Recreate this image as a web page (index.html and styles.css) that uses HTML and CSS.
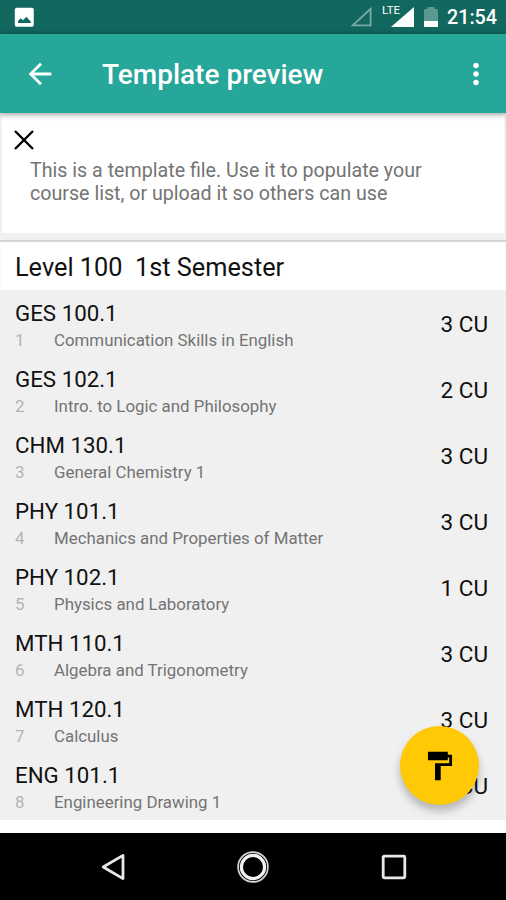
FILE: index.html
```html
<!DOCTYPE html>
<html lang="en">
<head>
  <meta charset="UTF-8">
  <meta name="viewport" content="width=device-width, initial-scale=1.0">
  <title>Template preview</title>
  <link rel="stylesheet" href="styles.css">
</head>
<body>
  <div class="app">
    <div class="status-bar">
      <svg class="picture-icon" width="20" height="20" viewBox="0 0 20 20">
        <rect x="0.8" y="0.8" width="19" height="19" rx="2" fill="#fff"/>
        <path d="M4 16v-1.8l2.4-3 2.6 2 3.4-3.4 4.4 5V16z" fill="#12685f"/>
      </svg>
      <div class="status-right">
        <svg width="24" height="20" viewBox="0 0 24 20">
          <path d="M3.8 18.4h17.8V1.8z" fill="none" stroke="#79aaa5" stroke-width="1.8"/>
        </svg>
        <span class="lte">LTE</span>
        <svg class="signal-icon" width="23" height="20" viewBox="0 0 23 20">
          <path d="M0 20h23V0z" fill="#fff"/>
        </svg>
        <svg class="battery-icon" width="14" height="20" viewBox="0 0 14 20">
          <path d="M0 3.5Q0 2 1.5 2H3.5V0h7v2h2Q14 2 14 3.5V14H0z" fill="#5a9992"/>
          <path d="M0 14h14v6H0z" fill="#fff"/>
        </svg>
        <span class="clock">21:54</span>
      </div>
    </div>

    <div class="toolbar">
      <svg width="34" height="34" viewBox="0 0 24 24">
        <path d="M20 11H7.83l5.59-5.59L12 4l-8 8 8 8 1.41-1.41L7.83 13H20v-2z" fill="#fff"/>
      </svg>
      <h1>Template preview</h1>
      <svg width="34" height="34" viewBox="0 0 24 24">
        <path d="M12 8c1.1 0 2-.9 2-2s-.9-2-2-2-2 .9-2 2 .9 2 2 2zm0 2c-1.1 0-2 .9-2 2s.9 2 2 2 2-.9 2-2-.9-2-2-2zm0 6c-1.1 0-2 .9-2 2s.9 2 2 2 2-.9 2-2-.9-2-2-2z" fill="#fff"/>
      </svg>
    </div>

    <div class="notice">
      <svg width="20" height="20" viewBox="0 0 20 20">
        <path d="M1 1l18 18M19 1L1 19" stroke="#000" stroke-width="2.4"/>
      </svg>
      <p>This is a template file. Use it to populate your<br>course list, or upload it so others can use</p>
    </div>

    <h2>Level 100&nbsp; 1st Semester</h2>

    <div class="course-list">
      <div class="course">
        <div class="code">GES 100.1</div>
        <div class="detail"><span class="number">1</span>Communication Skills in English</div>
        <div class="units">3 CU</div>
      </div>
      <div class="course">
        <div class="code">GES 102.1</div>
        <div class="detail"><span class="number">2</span>Intro. to Logic and Philosophy</div>
        <div class="units">2 CU</div>
      </div>
      <div class="course">
        <div class="code">CHM 130.1</div>
        <div class="detail"><span class="number">3</span>General Chemistry 1</div>
        <div class="units">3 CU</div>
      </div>
      <div class="course">
        <div class="code">PHY 101.1</div>
        <div class="detail"><span class="number">4</span>Mechanics and Properties of Matter</div>
        <div class="units">3 CU</div>
      </div>
      <div class="course">
        <div class="code">PHY 102.1</div>
        <div class="detail"><span class="number">5</span>Physics and Laboratory</div>
        <div class="units">1 CU</div>
      </div>
      <div class="course">
        <div class="code">MTH 110.1</div>
        <div class="detail"><span class="number">6</span>Algebra and Trigonometry</div>
        <div class="units">3 CU</div>
      </div>
      <div class="course">
        <div class="code">MTH 120.1</div>
        <div class="detail"><span class="number">7</span>Calculus</div>
        <div class="units">3 CU</div>
      </div>
      <div class="course">
        <div class="code">ENG 101.1</div>
        <div class="detail"><span class="number">8</span>Engineering Drawing 1</div>
        <div class="units">3 CU</div>
      </div>
    </div>

    <button class="fab">
      <svg width="34" height="34" viewBox="0 0 24 24">
        <path d="M17.5 4V2h-14v6h14V6h1v4h-10v12h4V12h8V4z" fill="#000"/>
      </svg>
    </button>

    <div class="nav-bar">
      <svg width="24" height="28" viewBox="0 0 24 28">
        <path d="M2.2 14L22 2.4v23.2z" fill="none" stroke="#e8e8e8" stroke-width="2.8" stroke-linejoin="round"/>
      </svg>
      <svg width="34" height="34" viewBox="0 0 34 34">
        <circle cx="17" cy="17" r="14.9" fill="none" stroke="#d8d8d8" stroke-width="1.7"/>
        <circle cx="17" cy="17" r="11.6" fill="none" stroke="#f2f2f2" stroke-width="3.2"/>
      </svg>
      <svg width="26" height="26" viewBox="0 0 26 26">
        <rect x="2.2" y="2.2" width="21.6" height="21.6" rx="1" fill="none" stroke="#e8e8e8" stroke-width="2.8"/>
      </svg>
    </div>
  </div>
</body>
</html>
```
FILE: styles.css
```css
body {
  font-family: Roboto, sans-serif;
  margin: 0;
  background: #fff;
  color: #111;
}

.app {
  position: relative;
  display: flex;
  flex-direction: column;
  height: 900px;
  overflow: hidden;
}

.status-bar {
  display: flex;
  justify-content: space-between;
  height: 34px;
  padding: 0 9px 0 14px;
  box-sizing: border-box;
  background: #12685f;
  color: #fff;
}

.picture-icon {
  margin-top: 7px;
}

.status-right {
  display: flex;
  align-items: flex-start;
  padding-top: 7px;
}

.lte {
  margin: -3px 0 0 9px;
  font-size: 11.5px;
  line-height: 13px;
}

.signal-icon {
  margin-left: -9px;
}

.battery-icon {
  margin-left: 10px;
}

.clock {
  margin-left: 9px;
  font-size: 19.7px;
  font-weight: 500;
  line-height: 22px;
}

.toolbar {
  z-index: 1;
  display: flex;
  align-items: center;
  height: 79px;
  padding: 0 13px 0 23px;
  box-sizing: border-box;
  background: #27a69a;
  box-shadow: 0 1px 6px rgba(0, 0, 0, 0.45);
  color: #fff;
}

.toolbar h1 {
  flex: 1;
  margin: 2px 0 0 45px;
  font-size: 28px;
  font-weight: 500;
  line-height: 34px;
}

.notice {
  height: 120px;
  padding: 17px 12px 0;
  box-sizing: border-box;
  border: solid #f0f0f0;
  border-width: 0 2px 0 2px;
}

.notice svg {
  display: block;
}

.notice p {
  margin: 9px 0 0 16px;
  color: #747474;
  font-size: 19.65px;
  line-height: 23px;
}

h2 {
  height: 57px;
  margin: 0;
  padding: 13px 15px 0;
  box-sizing: border-box;
  border-top: 7px solid #f0f0f0;
  box-shadow: inset 0 2px 1px #d2d2d2;
  font-size: 25.3px;
  font-weight: 400;
  line-height: 30px;
}

.course-list {
  height: 530px;
  background: #f0f0f0;
}

.course {
  display: grid;
  grid-template-columns: 1fr auto;
  grid-template-rows: 27px 26px;
  height: 66.05px;
  padding: 10px 18px 0 15px;
  box-sizing: border-box;
}

.code,
.units {
  font-size: 22.5px;
  line-height: 27px;
}

.code {
  font-size: 22.3px;
}

.detail {
  grid-row: 2;
  color: #747474;
  font-size: 16.87px;
  line-height: 26px;
}

.number {
  display: inline-block;
  width: 39px;
  color: #b4b4b4;
}

.units {
  grid-column: 2;
  grid-row: 1 / 3;
  margin-top: 11px;
}

.fab {
  position: absolute;
  left: 400px;
  top: 726px;
  display: flex;
  justify-content: center;
  align-items: center;
  width: 79px;
  height: 79px;
  padding: 0;
  border: none;
  border-radius: 50%;
  background: #ffc905;
  box-shadow: 0 6px 9px rgba(0, 0, 0, 0.25);
}

.nav-bar {
  display: flex;
  align-items: center;
  justify-content: space-between;
  height: 67px;
  margin-top: auto;
  padding: 0 99px 0 101px;
  box-sizing: border-box;
  background: #000;
}
```
